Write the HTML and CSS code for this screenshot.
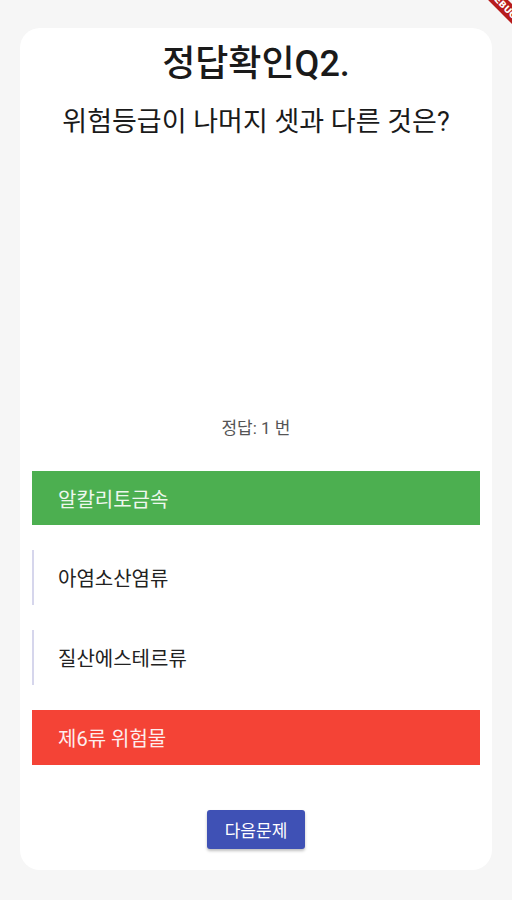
FILE: index.html
```html
<!DOCTYPE html>
<html lang="ko">
<head>
    <meta charset="UTF-8">
    <meta name="viewport" content="width=device-width, initial-scale=1.0">
    <title>정답확인</title>
    <link rel="stylesheet" href="styles.css">
</head>
<body>

<div class="screen">
    <div class="card">
        <h1 class="title">정답확인Q2.</h1>
        <h2 class="question">위험등급이 나머지 셋과 다른 것은?</h2>

        <div class="answer">정답: 1 번</div>

        <!-- Options -->
        <div class="options">
            <div class="option correct">알칼리토금속</div>
            <div class="option">아염소산염류</div>
            <div class="option">질산에스테르류</div>
            <div class="option wrong">제6류 위험물</div>
        </div>

        <div class="footer">
            <button class="next-btn">다음문제</button>
        </div>
    </div>
</div>

<div class="debug-banner"><span>DEBUG</span></div>

</body>
</html>
```

FILE: styles.css
```css
body {
    font-family: Roboto, "Noto Sans CJK KR", sans-serif;
    margin: 0;
    padding: 0;
    background-color: #f6f6f6;
    color: #1a1a1a;
}

.screen {
    padding: 28px 20px 30px 20px;
}

.card {
    background-color: white;
    border-radius: 20px;
    height: 842px;
    box-sizing: border-box;
    padding: 12px 12px 0 12px;
    display: flex;
    flex-direction: column;
}

.title {
    margin: 0;
    text-align: center;
    font-size: 36px;
    font-weight: 500;
    line-height: 48px;
}

.question {
    margin: 18px 0 0 0;
    text-align: center;
    font-size: 27px;
    font-weight: 400;
    line-height: 32px;
}

.answer {
    margin-top: 279px;
    text-align: center;
    font-size: 17px;
    color: #555;
    line-height: 22px;
}

.options {
    margin-top: 32px;
    display: flex;
    flex-direction: column;
    gap: 25px;
}

.option {
    height: 55px;
    display: flex;
    align-items: center;
    padding-left: 24px;
    font-size: 20px;
    color: #222;
    border-left: 2px solid #d6d6ec;
    box-sizing: border-box;
}

.option.correct {
    background-color: #4caf50;
    color: #eef7ee;
    border-left-color: #4caf50;
    height: 54px;
}

.option.wrong {
    background-color: #f44336;
    color: #fdeeee;
    border-left-color: #f44336;
}

.footer {
    display: flex;
    justify-content: center;
    margin-top: 45px;
}

.next-btn {
    background-color: #3f51b5;
    color: white;
    border: none;
    border-radius: 3px;
    width: 98px;
    height: 39px;
    font-family: Roboto, "Noto Sans CJK KR", sans-serif;
    font-size: 17px;
    box-shadow: 0 2px 3px rgba(0, 0, 0, 0.25);
}

/* Debug ribbon */
.debug-banner {
    position: absolute;
    top: 0;
    right: 0;
    width: 60px;
    height: 60px;
    overflow: hidden;
}

.debug-banner span {
    position: absolute;
    top: -2px;
    right: -36px;
    width: 90px;
    transform: rotate(45deg);
    background-color: #b71c1c;
    color: white;
    font-size: 9px;
    font-weight: bold;
    text-align: center;
    line-height: 14px;
    font-family: "DejaVu Sans", sans-serif;
}
```
